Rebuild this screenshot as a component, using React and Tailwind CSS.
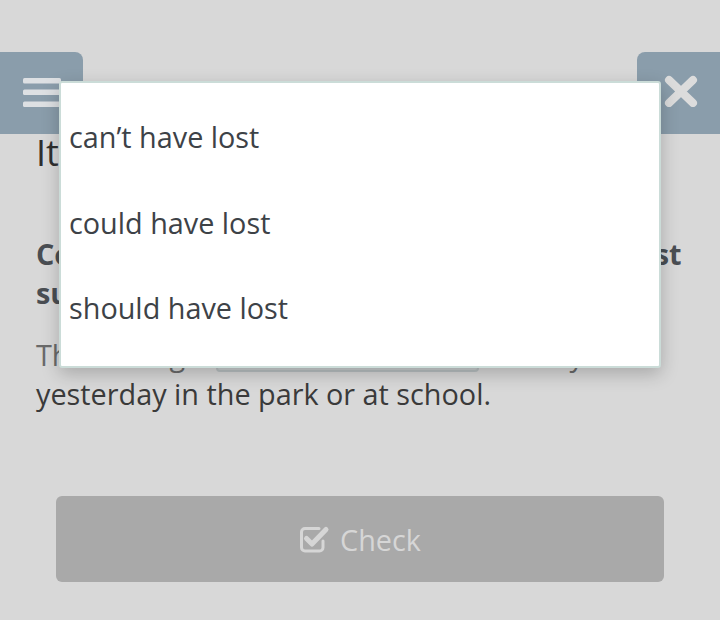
import { useState } from 'react'

const options = ['can’t have lost', 'could have lost', 'should have lost']

function Hamburger() {
  return (
    <svg width="38" height="30" viewBox="0 0 38 30">
      <rect x="0" y="0" width="38" height="5.5" rx="1.5" fill="#dde0e3" />
      <rect x="0" y="11.5" width="38" height="5.5" rx="1.5" fill="#dde0e3" />
      <rect x="0" y="23.5" width="38" height="5.5" rx="1.5" fill="#dde0e3" />
    </svg>
  )
}

function Cross() {
  return (
    <svg width="34" height="32" viewBox="0 0 34 32">
      <path d="M5 5 L29 28 M29 5 L5 28" stroke="#dcdcdc" strokeWidth="8" strokeLinecap="round" />
    </svg>
  )
}

function CheckSquare() {
  return (
    <svg width="31" height="30" viewBox="0 0 31 30" fill="none">
      <path d="M20 4.5 H6 a3.5 3.5 0 0 0 -3.5 3.5 V23.5 a3.5 3.5 0 0 0 3.5 3.5 H20.5 a3.5 3.5 0 0 0 3.5 -3.5 V17"
        stroke="#d6d6d6" strokeWidth="3" strokeLinecap="round" />
      <path d="M7.5 14.5 L13 20 L27 5.5" stroke="#d6d6d6" strokeWidth="5" strokeLinecap="round" strokeLinejoin="round" />
    </svg>
  )
}

export default function App() {
  const [picked, setPicked] = useState(null)

  return (
    <div className="relative h-[620px] w-[720px] overflow-hidden bg-[#d8d8d8] font-['Open_Sans',sans-serif] text-[#333]">
      <div className="pt-[52px]">
        <div className="flex h-[82px] justify-between">
          <button className="flex w-[83px] items-center justify-center rounded-tr-lg bg-[#8a9dab] pl-[1px]">
            <Hamburger />
          </button>
          <button className="flex w-[83px] items-center justify-center rounded-tl-lg bg-[#8a9dab] pl-[4px] pb-[4px]">
            <Cross />
          </button>
        </div>

        <div className="px-9">
          <h1 className="text-[36px] leading-[38px] text-[#2f2f2f]">It could have happened anywhere</h1>

          <p className="mt-[62px] whitespace-nowrap text-[28.8px] font-bold leading-[39px] text-[#4a4e53]">
            Complete the sentence by choosing the most
            <br />
            suitable option.
          </p>

          <p className="mt-[22px] text-[28.8px] leading-[39px] text-[#3a3a3a]">
            <span className="text-[#6a6a6a]">The teenager</span>
            <span className="ml-[3px] mr-[6px] inline-block h-[32px] w-[263px] translate-y-[6px] rounded border-2 border-[#b9c0c2] bg-[#c9cdce] align-baseline" />
            <span className="text-[#6a6a6a]">her key</span>
            <br />
            yesterday in the park or at school.
          </p>

          <button className="mx-5 mt-[83px] flex h-[86px] w-[608px] items-center justify-center gap-[10px] rounded-md bg-[#a9a9a9] text-[28.8px] text-[#d6d6d6]">
            <CheckSquare />
            <span className="pt-[1px]">Check</span>
          </button>
        </div>
      </div>

      <ul className="absolute left-[59px] top-[81px] w-[602px] rounded-[3px] border-2 border-[#cbdcd8] bg-white pt-[11px] pb-[15px] shadow-[0_6px_18px_rgba(0,0,0,0.22)]">
        {options.map((o) => (
          <li key={o}>
            <button
              onClick={() => setPicked(o)}
              className={`flex h-[85.5px] w-full items-center pl-[8px] text-left text-[28.8px] text-[#3d4247] ${picked === o ? 'bg-gray-100' : ''}`}
            >
              {o}
            </button>
          </li>
        ))}
      </ul>
    </div>
  )
}
